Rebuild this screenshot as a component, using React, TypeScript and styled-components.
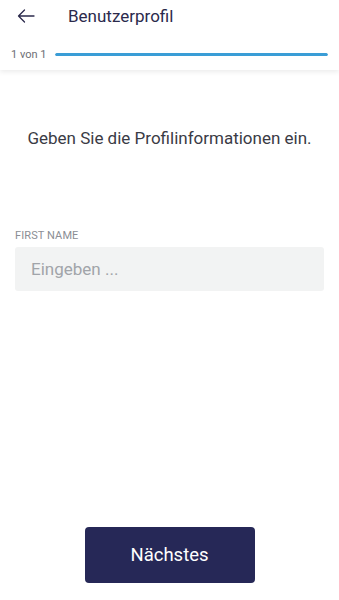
import React from "react";
import styled, {createGlobalStyle} from "styled-components";

const GlobalStyle = createGlobalStyle`
  html, body {
    margin: 0;
    padding: 0;
    background: #ffffff;
    font-family: Roboto, "Noto Sans", sans-serif;
  }
  * { box-sizing: border-box; }
`

export default function App() {
    return (
        <>
            <GlobalStyle/>
            <Page>
                <TopBar>
                    <Header>
                        <BackButton aria-label="back">
                            <svg width="18" height="14" viewBox="0 0 18 14" fill="none">
                                <path d="M17 7H1.5M7.5 1L1.5 7l6 6" stroke="#2b2a4c" strokeWidth="1.3"
                                      strokeLinecap="round" strokeLinejoin="round"/>
                            </svg>
                        </BackButton>
                        <Title>Benutzerprofil</Title>
                    </Header>
                    <ProgressRow>
                        <StepText>1 von 1</StepText>
                        <Track>
                            <Fill style={{width: "100%"}}/>
                        </Track>
                    </ProgressRow>
                </TopBar>

                <Content>
                    <Intro>Geben Sie die Profilinformationen ein.</Intro>
                    <Field>
                        <Label>FIRST NAME</Label>
                        <Input placeholder="Eingeben ..."/>
                    </Field>
                </Content>

                <Footer>
                    <NextButton>Nächstes</NextButton>
                </Footer>
            </Page>
        </>
    )
}

const Page = styled.div`
  height: 600px;
  display: flex;
  flex-direction: column;
  overflow: hidden;
`

const TopBar = styled.div`
  background: #fff;
  box-shadow: 0 2px 5px rgba(0, 0, 0, 0.08);
  padding-bottom: 6px;
`

const Header = styled.div`
  height: 34px;
  display: flex;
  align-items: center;
`

const BackButton = styled.button`
  width: 68px;
  height: 34px;
  border: none;
  background: none;
  padding: 0 0 3px 17px;
  display: flex;
  align-items: center;
`

const Title = styled.h1`
  margin: 0 0 3px;
  font-size: 17px;
  font-weight: 400;
  color: #2b2a4c;
`

const ProgressRow = styled.div`
  display: flex;
  align-items: center;
  padding: 11px 11px 0 11px;
  gap: 9px;
  height: 30px;
`

const StepText = styled.span`
  font-size: 11px;
  color: #6d6f75;
  white-space: nowrap;
`

const Track = styled.div`
  flex: 1;
  height: 3px;
  border-radius: 2px;
  background: #e4e6ea;
  overflow: hidden;
`

const Fill = styled.div`
  height: 100%;
  border-radius: 2px;
  background: #3a9dd6;
`

const Content = styled.div`
  flex: 1;
  padding: 58px 15px 0;
`

const Intro = styled.p`
  margin: 0;
  text-align: center;
  font-size: 17px;
  color: #3a3b45;
`

const Field = styled.div`
  margin-top: 81px;
  display: flex;
  flex-direction: column;
  gap: 5px;
`

const Label = styled.label`
  font-size: 11px;
  color: #8b8e94;
  letter-spacing: 0.1px;
`

const Input = styled.input`
  height: 44px;
  border: none;
  border-radius: 3px;
  background: #f2f3f3;
  padding: 0 16px;
  font-family: Roboto, "Noto Sans", sans-serif;
  font-size: 17px;
  color: #3a3b45;
  outline: none;

  &::placeholder {
    color: #a1a4a9;
  }
`

const Footer = styled.div`
  display: flex;
  justify-content: center;
  padding-bottom: 17px;
`

const NextButton = styled.button`
  width: 170px;
  height: 56px;
  border: none;
  border-radius: 4px;
  background: #262857;
  color: #ffffff;
  font-family: Roboto, "Noto Sans", sans-serif;
  font-size: 18.5px;
`
